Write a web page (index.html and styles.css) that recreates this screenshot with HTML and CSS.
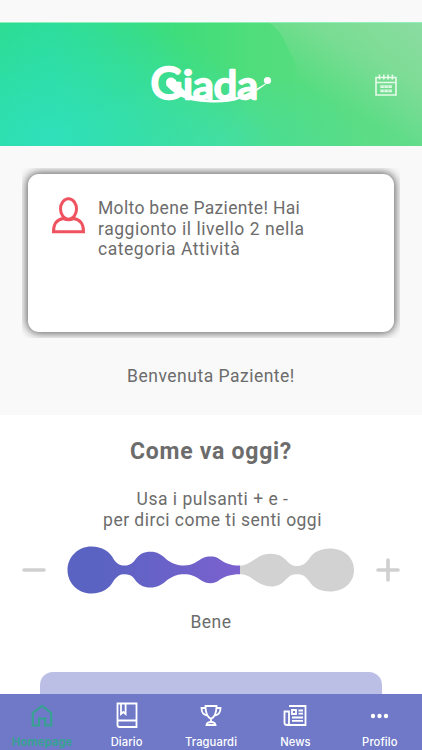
FILE: index.html
```html
<!DOCTYPE html>
<html lang="it">
<head>
<meta charset="utf-8">
<meta name="viewport" content="width=device-width, initial-scale=1">
<title>Giada</title>
<link rel="stylesheet" href="styles.css">
</head>
<body>

<div class="status-bar"></div>

<header class="header">
  <svg class="header-bg" viewBox="0 0 422 124" preserveAspectRatio="none">
    <defs>
      <linearGradient id="sheet" gradientUnits="userSpaceOnUse" x1="315" y1="70" x2="370" y2="-30">
        <stop offset="0" stop-color="#b4dcb0" stop-opacity="0"/>
        <stop offset="0.5" stop-color="#b4dcb0" stop-opacity="0.35"/>
        <stop offset="1" stop-color="#b4dcb8" stop-opacity="0.5"/>
      </linearGradient>
    </defs>
    <path fill="url(#sheet)" d="M269 0C284 9 286 24 293 35C300 46 300 80 260 124H422V0Z"/>
  </svg>
  <svg class="logo" viewBox="0 -15 124 70">
    <g class="logo-text">
      <text class="logo-g" x="0.5" y="34" textLength="32" lengthAdjust="spacingAndGlyphs">G</text>
      <text x="33" y="33.5" textLength="75" lengthAdjust="spacingAndGlyphs">iada</text>
    </g>
    <circle cx="21" cy="17.500" r="5"/>
    <path d="M16 20C28 34 44 37.500 66 37.500C90 37.500 103 29 116 19.200L115.500 18.500C101 27 91 34 66 35C46 35 34 29 25 14Z"/>
    <circle cx="117.500" cy="15.500" r="3.600"/>
  </svg>
  <svg class="calendar" viewBox="0 0 22 22">
    <path d="M1 3.500H21V21H1ZM1 8.500H21M4.500 0.500V5.500M8.800 0.500V5.500M13.100 0.500V5.500M17.400 0.500V5.500"/>
    <path class="days" d="M6 11.800H8.200V13.500H6ZM10 11.800H12.200V13.500H10ZM14 11.800H16.200V13.500H14ZM6 16H8.200V17.700H6ZM10 16H12.200V17.700H10ZM14 16H16.200V17.700H14Z"/>
  </svg>
</header>

<section class="welcome">
  <div class="card-wrap">
    <div class="card">
      <svg class="user" viewBox="0 0 33 37">
        <ellipse cx="16.5" cy="12" rx="8" ry="10.3"/>
        <path d="M1.5 34.8C1.5 27 5 22.5 11.5 21.6Q16.5 24 21.5 21.6C28 22.5 31.5 27 31.5 34.8Z"/>
      </svg>
      <p class="message">
        <span class="line m1">Molto bene Paziente! Hai</span>
        <span class="line m2">raggionto il livello 2 nella</span>
        <span class="line m3">categoria Attività</span>
      </p>
    </div>
  </div>
  <p class="greeting">Benvenuta Paziente!</p>
</section>

<section class="mood">
  <h1>Come va oggi?</h1>
  <p class="help">
    <span class="line h1">Usa i pulsanti + e -</span>
    <span class="line h2">per dirci come ti senti oggi</span>
  </p>
  <div class="slider">
    <svg class="btn" viewBox="0 0 24 24"><path d="M2 12H22"/></svg>
    <svg class="blobs" viewBox="0 0 288 48">
      <defs>
        <linearGradient id="level" gradientUnits="userSpaceOnUse" x1="0" y1="0" x2="173" y2="0">
          <stop offset="0.2" stop-color="#5b63c2"/>
          <stop offset="1" stop-color="#7b61cf"/>
        </linearGradient>
      </defs>
      <path fill="url(#level)" d="M24.5 .5C35 .5 43 5.500 46.500 13C50 18 53 19.500 57.500 19.500C62 19.500 65 18 68 14C72 8 77 5.800 83.500 5.800C90 5.800 94.500 8.500 99 13C105 17.800 111 19.500 117 19.500C125 19.500 129 16 134 13C137.500 10.800 140 10.500 143.500 10.500C147 10.500 150 11 153 13.500C158 17 163 19.600 173 19.600V28.200C163 28.200 158 30.500 153 33.500C150 36 147 37.300 143.500 37.300C140 37.300 137 36 134 34.300C128 30 124 28.200 117 28.200C111 28.200 105 30 99 35C94.500 39 90 41.500 83.500 41.500C77 41.500 71 39 67.500 33C65 29.500 62 28.200 57.500 28.200C53 28.200 50 30 46.500 35C43 42 35 47.500 24.500 47.500C11 47.500 .5 37 .5 24S11 .5 24.500 .5Z"/>
      <path class="off" d="M173 19.600C179 19.600 184 16 189 12.500C194 9 198.500 7.800 204 7.800C210 7.800 215 10 219 14C223 18 225 20 230 20C235 20 238 18 242 13C246 6 254 2.500 263 2.500C277 2.500 287 11.500 287 24S277 45.500 263 45.500C253 45.500 246 41.500 242 35C238 29.500 235 28.200 230 28.200C225 28.200 222 30 219 33.500C215 38 210 40.500 204 40.500C198.500 40.500 193 38 188 34.500C183 30.500 179 28.200 173 28.200Z"/>
    </svg>
    <svg class="btn" viewBox="0 0 24 24"><path d="M2 12H22M12 2V22"/></svg>
  </div>
  <p class="value">Bene</p>
  <div class="panel"></div>
</section>

<nav class="tabs">
  <a class="tab active">
    <svg viewBox="0 0 24 26"><path d="M2.800 23.500V11L12 3.800L21.200 11V23.500H15.200V16.500H9V23.500Z"/></svg>
    <span>Homepage</span>
  </a>
  <a class="tab diario">
    <svg viewBox="0 0 24 26"><path d="M2.500 1.500H21.500V25H4.500Q2.500 25 2.500 23ZM2.500 18.500H21.500M6 1.500V12L8.300 10L10.600 12V1.500"/></svg>
    <span>Diario</span>
  </a>
  <a class="tab traguardi">
    <svg viewBox="0 0 24 26"><path d="M6.500 4H17.500C17.500 11 16 15 12 17C8 15 6.500 11 6.500 4ZM6.500 6H2.500C2.500 10 4.500 13 8.500 13.500M17.500 6H21.500C21.500 10 19.500 13 15.500 13.500M12 17V20M7.500 23C8 20.500 10 20 12 20S16 20.500 16.500 23Z"/></svg>
    <span>Traguardi</span>
  </a>
  <a class="tab news">
    <svg viewBox="0 0 24 26"><path d="M6 4H22.500V23H4Q1.500 23 1.500 21V9.500H6V21Q6 23 4 23M9 8H13V12H9ZM15.500 8.500H20M15.500 11.700H20M9 15.500H20M9 18.800H20"/></svg>
    <span>News</span>
  </a>
  <a class="tab profilo">
    <svg viewBox="0 0 24 26"><g class="dots"><circle cx="5" cy="14" r="2.200"/><circle cx="11.500" cy="14" r="2.200"/><circle cx="18" cy="14" r="2.200"/></g></svg>
    <span>Profilo</span>
  </a>
</nav>

</body>
</html>
```
FILE: styles.css
```css
* {
  box-sizing: border-box;
}

body {
  margin: 0;
  height: 750px;
  overflow: hidden;
  display: flex;
  flex-direction: column;
  font-family: Roboto, "Liberation Sans", sans-serif;
  font-size: 17.5px;
  line-height: 20.7px;
  color: #6c6c6c;
  background-color: #fff;
}

p, h1 {
  margin: 0;
}

svg {
  display: block;
  flex: none;
}

.status-bar {
  flex: none;
  height: 22px;
  background-color: #f9f9f9;
}

.header {
  flex: none;
  position: relative;
  height: 124px;
  display: flex;
  align-items: center;
  border-top: 1px solid #8ff0bb;
  background:
    radial-gradient(ellipse 220px 130px at 50px 115px, rgba(48, 224, 190, 0.9), rgba(48, 224, 190, 0)),
    radial-gradient(ellipse 150px 80px at 220px 124px, rgba(70, 222, 165, 0.8), rgba(70, 222, 165, 0)),
    linear-gradient(90deg, #2bdc8e 0, #2cdd98 50px, #3fdd7b 180px, #50dd7b 250px, #62dc8a 422px);
}

.header-bg {
  position: absolute;
  top: 0;
  left: 0;
  width: 100%;
  height: 100%;
}

.logo {
  position: relative;
  width: 124px;
  height: 70px;
  margin-left: 150px;
  margin-top: 1px;
  fill: #fff;
}

.logo-text {
  font-family: Lato, sans-serif;
  font-size: 38px;
  stroke: #fff;
  stroke-width: 2.4px;
  stroke-linejoin: round;
}

.logo-g {
  font-size: 44px;
}

.calendar {
  position: relative;
  width: 22px;
  height: 22px;
  margin-left: 101px;
  fill: none;
  stroke: #e6fbe9;
  stroke-width: 1.6px;
}

.calendar .days {
  stroke-width: 1.2px;
}

.welcome {
  flex: none;
  height: 269px;
  padding: 22px 22px 0;
  background-color: #f9f9f9;
}

.card-wrap {
  height: 170px;
  padding: 6px;
  overflow: hidden;
}

.card {
  height: 158px;
  display: flex;
  padding: 23px 24px;
  border-radius: 11px;
  background-color: #fff;
  box-shadow: 0 0 10px 1px #555;
}

.user {
  width: 33px;
  height: 37px;
  fill: none;
  stroke: #ef5360;
  stroke-width: 3px;
}

.message {
  margin-top: 1px;
  margin-left: 13px;
}

.line {
  display: block;
  white-space: nowrap;
}

.m1 { letter-spacing: 0.33px; }
.m2 { letter-spacing: 0.54px; }
.m3 { letter-spacing: 0.54px; }

.greeting {
  margin-top: 28px;
  text-align: center;
  letter-spacing: 0.5px;
}

.mood {
  flex: none;
  height: 279px;
  overflow: hidden;
  text-align: center;
}

h1 {
  margin-top: 22px;
  font-size: 23px;
  line-height: 30px;
  letter-spacing: 0.75px;
}

.help {
  margin-top: 22px;
  padding-left: 3px;
}

.help .h1 { letter-spacing: 0.5px; }
.help .h2 { letter-spacing: 0.47px; }

.slider {
  display: flex;
  align-items: center;
  justify-content: space-between;
  margin-top: 16px;
  padding: 0 22px;
}

.btn {
  width: 24px;
  height: 24px;
  stroke: #d0d0d0;
  stroke-width: 3.6px;
  stroke-linecap: round;
}

.blobs {
  width: 288px;
  height: 48px;
}

.off {
  fill: #d2d2d2;
}

.value {
  margin-top: 18px;
  letter-spacing: 0.5px;
}

.panel {
  height: 60px;
  margin: 39px 40px 0;
  border-radius: 13px;
  background-color: #bbbfe5;
}

.tabs {
  flex: none;
  height: 56px;
  display: flex;
  color: #fff;
  background-color: #6f79c8;
}

.tab {
  flex: 1;
  display: flex;
  flex-direction: column;
  align-items: center;
  padding-top: 8px;
  font-family: Inter, sans-serif;
  font-size: 11.2px;
  font-weight: 500;
  line-height: 14px;
  letter-spacing: 0.1px;
}

.tab svg {
  width: 24px;
  height: 26px;
  margin-bottom: 7px;
  fill: none;
  stroke: currentColor;
  stroke-width: 1.8px;
}

.tab.active {
  color: #38a292;
}

.tab.active svg {
  stroke-width: 2.2px;
}

.tab.active span {
  font-weight: 700;
}

.tab .dots {
  fill: currentColor;
  stroke: none;
}
```
